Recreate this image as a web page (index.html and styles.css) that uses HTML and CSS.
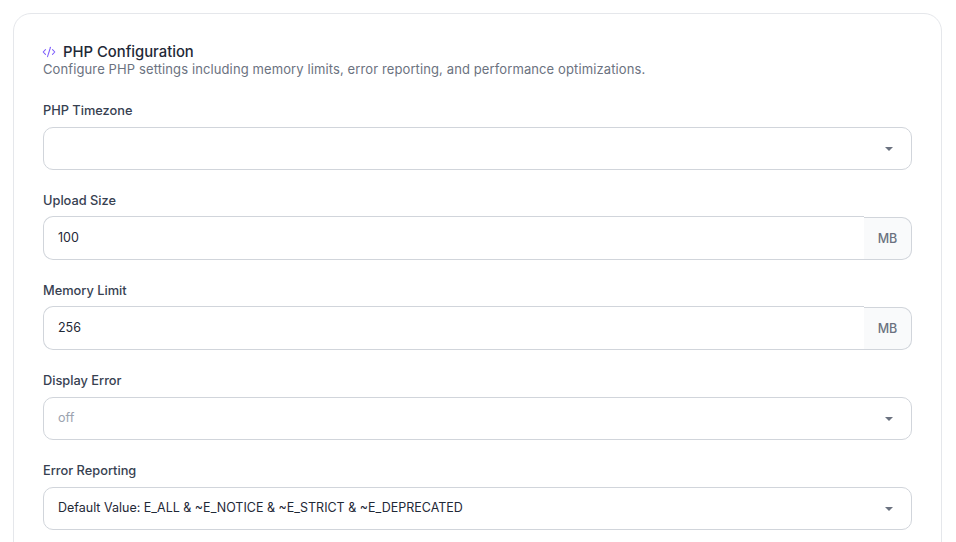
FILE: index.html
```html
<!DOCTYPE html>
<html lang="en">
<head>
<meta charset="utf-8">
<title>PHP Configuration</title>
<link rel="stylesheet" href="styles.css">
</head>
<body>
<section class="card">
  <header class="card-head">
    <h2 class="card-title">
      <svg class="code-icon" viewBox="0 0 24 24" width="14" height="14" fill="none" stroke="currentColor" stroke-width="1.8" stroke-linecap="round" stroke-linejoin="round"><path d="m18 16 4-4-4-4"/><path d="m6 8-4 4 4 4"/><path d="m14.5 4-5 16"/></svg>
      <span>PHP Configuration</span>
    </h2>
    <p class="card-desc">Configure PHP settings including memory limits, error reporting, and performance optimizations.</p>
  </header>
  <div class="field">
    <div class="label">PHP Timezone</div>
    <div class="control select"><span class="value"></span><span class="caret"></span></div>
  </div>
  <div class="field">
    <div class="label">Upload Size</div>
    <div class="group"><div class="control input"><span class="value">100</span></div><div class="addon">MB</div></div>
  </div>
  <div class="field">
    <div class="label">Memory Limit</div>
    <div class="group"><div class="control input"><span class="value">256</span></div><div class="addon">MB</div></div>
  </div>
  <div class="field">
    <div class="label">Display Error</div>
    <div class="control select"><span class="value muted">off</span><span class="caret"></span></div>
  </div>
  <div class="field">
    <div class="label">Error Reporting</div>
    <div class="control select"><span class="value">Default Value: E_ALL &amp; ~E_NOTICE &amp; ~E_STRICT &amp; ~E_DEPRECATED</span><span class="caret"></span></div>
  </div>
</section>
</body>
</html>
```
FILE: styles.css
```css
* { box-sizing: border-box; }
html, body { height: 100%; }
body {
  margin: 0;
  padding: 13px 14px 0 13px;
  background: #fff;
  color: #1f2937;
  font-family: Inter, "Liberation Sans", sans-serif;
  overflow: hidden;
}
.card {
  border: 1px solid #e5e7eb;
  border-radius: 18px;
  padding: 28px 29px 40px;
  background: #fff;
  display: flex;
  flex-direction: column;
  gap: 21px;
}
.card-head { margin-bottom: 3px; }
.card-title {
  margin: 0;
  display: flex;
  align-items: center;
  gap: 7px;
  font-size: 14.8px;
  line-height: 20px;
  font-weight: 500;
  color: #1f2937;
}
.code-icon { color: #7c5cfc; flex: none; margin-left: -1px; }
.card-desc {
  margin: -1px 0 0;
  font-size: 13px;
  letter-spacing: .11px;
  line-height: 16px;
  color: #6b7280;
}
.field { display: flex; flex-direction: column; gap: 6px; }
.label {
  font-size: 12.8px;
  line-height: 20px;
  font-weight: 500;
  color: #374151;
}
.control {
  height: 43px;
  display: flex;
  align-items: center;
  justify-content: space-between;
  padding: 0 16px 0 14px;
  border: 1px solid #d1d5db;
  border-radius: 10px;
  background: #fff;
  font-size: 12.5px;
  color: #1f2937;
}
.value { margin-bottom: 2px; }
.muted { color: #9ca3af; }
.caret {
  width: 0;
  height: 0;
  border-left: 4px solid transparent;
  border-right: 4px solid transparent;
  border-top: 4.5px solid #6b7280;
  margin-right: 2px;
}
.group { display: flex; height: 43px; }
.group .control { height: 44px; margin-top: -1px; flex: 1; border-radius: 10px 0 0 10px; border-right: 0; }
.addon {
  width: 48px;
  display: flex;
  align-items: center;
  justify-content: center;
  background: #f9fafb;
  border: 1px solid #d1d5db;
  border-left: 0;
  border-radius: 0 10px 10px 0;
  font-size: 12.5px;
  font-weight: 500;
  color: #6b7280;
}
```
